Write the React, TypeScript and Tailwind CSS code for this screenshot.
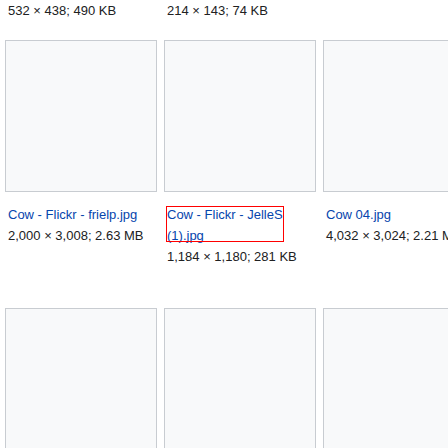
import React from "react";

const Box = () => (
  <div className="w-[152px] h-[152px] shrink-0 border border-[#c8ccd1] bg-[#f8f9fa]" />
);

export default function App() {
  return (
    <div className="w-[448px] h-[448px] overflow-hidden bg-white pl-[5px] font-['Liberation_Sans',Arial,sans-serif] text-[13px] leading-[21px] text-[#202122]">
      <div className="flex gap-[7px] h-[40px]">
        <div className="w-[152px] shrink-0 pl-[3px] whitespace-nowrap">532 × 438; 490 KB</div>
        <div className="w-[152px] shrink-0 pl-[3px] whitespace-nowrap">214 × 143; 74 KB</div>
        <div className="w-[152px] shrink-0 pl-[3px]" />
      </div>
      <div className="flex gap-[7px] h-[268px]">
        <div className="w-[152px] shrink-0 flex flex-col">
          <Box />
          <div className="mt-[12px] pl-[3px] whitespace-nowrap">
            <div className="text-[#0645ad]">Cow - Flickr - frielp.jpg</div>
            <div>2,000 × 3,008; 2.63 MB</div>
          </div>
        </div>
        <div className="w-[152px] shrink-0 flex flex-col">
          <Box />
          <div className="relative mt-[12px] pl-[3px] whitespace-nowrap">
            <div className="text-[#0645ad]">Cow - Flickr - JelleS</div>
            <div className="text-[#0645ad]">(1).jpg</div>
            <div>1,184 × 1,180; 281 KB</div>
            <div className="absolute left-[2px] top-[2px] w-[118px] h-[36px] border border-[#ff0000]" />
          </div>
        </div>
        <div className="w-[152px] shrink-0 flex flex-col">
          <Box />
          <div className="mt-[12px] pl-[3px] whitespace-nowrap">
            <div className="text-[#0645ad]">Cow 04.jpg</div>
            <div>4,032 × 3,024; 2.21 MB</div>
          </div>
        </div>
      </div>
      <div className="flex gap-[7px]">
        <Box />
        <Box />
        <Box />
      </div>
    </div>
  );
}
